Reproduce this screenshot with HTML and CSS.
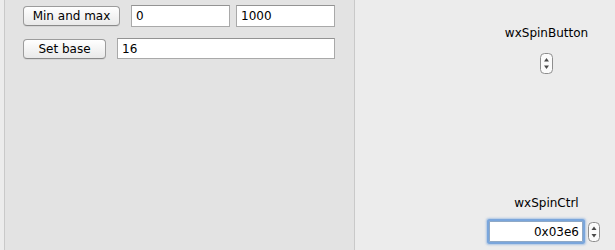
FILE: index.html
```html
<!DOCTYPE html>
<html lang="en">
<head>
    <meta charset="UTF-8">
    <title>wxSpinCtrl sample</title>
    <link rel="stylesheet" href="styles.css">
</head>
<body>
    <div class="window">
        <div class="panel">
            <div class="row">
                <button class="button btn-minmax">Min and max</button>
                <input class="field field-small" type="text" value="0">
                <input class="field field-small" type="text" value="1000">
            </div>
            <div class="row">
                <button class="button btn-base">Set base</button>
                <input class="field field-wide" type="text" value="16">
            </div>
        </div>

        <div class="side">
            <div class="label label-top">wxSpinButton</div>
            <div class="spin">
                <svg viewBox="0 0 13 21" width="13" height="21">
                    <rect x="0.5" y="0.5" width="12" height="20" rx="4" fill="#fbfbfb" stroke="#8e8e8e"/>
                    <path d="M4 8.5 L6.5 5 L9 8.5 Z" fill="#4a4a4a"/>
                    <path d="M4 12.5 L6.5 16 L9 12.5 Z" fill="#4a4a4a"/>
                </svg>
            </div>

            <div class="label label-bottom">wxSpinCtrl</div>
            <div class="spin-ctrl">
                <input class="field field-spin" type="text" value="0x03e6">
                <div class="spin spin-small">
                    <svg viewBox="0 0 12 20" width="12" height="20">
                        <rect x="0.5" y="0.5" width="11" height="19" rx="4" fill="#fbfbfb" stroke="#8e8e8e"/>
                        <path d="M3.5 8 L6 4.5 L8.5 8 Z" fill="#4a4a4a"/>
                        <path d="M3.5 12 L6 15.5 L8.5 12 Z" fill="#4a4a4a"/>
                    </svg>
                </div>
            </div>
        </div>
    </div>
</body>
</html>
```

FILE: styles.css
```css
:root {
    --window: #ececec;
    --panel: #e3e3e3;
    --panel-edge: #c9c9c9;
    --field-border: #a9a9a9;
    --text: #000000;
    --focus: #7aa6dc;
}

* {
    margin: 0;
    padding: 0;
    box-sizing: border-box;
    font-family: 'DejaVu Sans', 'Liberation Sans', sans-serif;
}

body {
    background: var(--window);
    color: var(--text);
    font-size: 12px;
    line-height: 15px;
}

.window {
    display: flex;
    height: 250px;
    overflow: hidden;
}

/* Panneau de gauche */
.panel {
    width: 351px;
    margin-left: 4px;
    background: var(--panel);
    border-left: 1px solid var(--panel-edge);
    border-right: 1px solid var(--panel-edge);
    padding: 5px 0 0 18px;
    display: flex;
    flex-direction: column;
    gap: 11px;
}

.row {
    display: flex;
    align-items: center;
}

.button {
    height: 20px;
    font-size: 12px;
    color: var(--text);
    background: linear-gradient(#ffffff 0%, #f4f4f4 50%, #e9e9e9 100%);
    border: 1px solid #9c9c9c;
    border-bottom-color: #8a8a8a;
    border-radius: 4px;
    box-shadow: 0 1px 0 rgba(0, 0, 0, 0.06);
    margin-right: 11px;
}

.btn-minmax {
    width: 97px;
}

.btn-base {
    width: 83px;
}

.field {
    height: 22px;
    font-size: 12px;
    color: var(--text);
    background: #ffffff;
    border: 1px solid var(--field-border);
    border-top-color: #939393;
    padding: 0 4px;
    outline: none;
}

.field-small {
    width: 99px;
    margin-right: 6px;
}

.row:last-child .field {
    height: 21px;
}

.field-wide {
    width: 218px;
}

/* Zone de droite */
.side {
    flex: 1;
    display: flex;
    flex-direction: column;
    align-items: center;
    padding-left: 123px;
}

.label-top {
    margin-top: 26px;
}

.spin {
    display: flex;
    margin-top: 12px;
}

.label-bottom {
    margin-top: 122px;
}

.spin-ctrl {
    display: flex;
    align-items: center;
    margin-top: 10px;
    margin-right: 4px;
}

.field-spin {
    width: 94px;
    height: 21px;
    text-align: right;
    padding-right: 3px;
    border-color: #8fa9c6;
    box-shadow: 0 0 0 2px var(--focus), 0 0 2px 3px rgba(122, 166, 220, 0.55);
    border-radius: 1px;
}

.spin-small {
    margin: 0 0 0 5px;
}
```
